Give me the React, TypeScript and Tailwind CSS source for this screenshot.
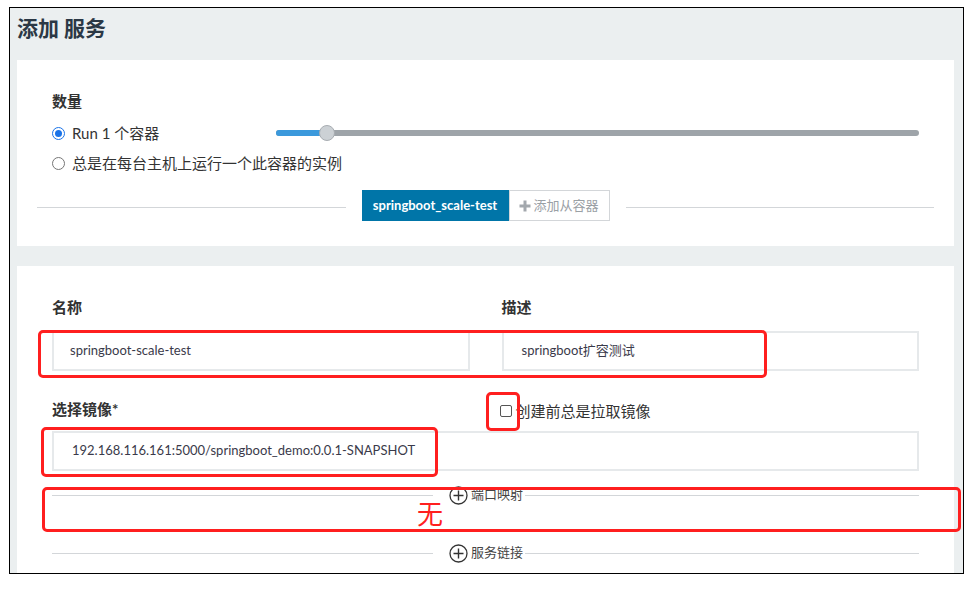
import React from 'react';

const FONT = "font-['Lato','Noto_Sans_CJK_SC',sans-serif]";

function PlusCircle() {
  return (
    <svg width="19" height="19" viewBox="0 0 19 19" className="shrink-0">
      <circle cx="9.5" cy="9.5" r="8.5" fill="none" stroke="#333" strokeWidth="1.3" />
      <path d="M9.5 4.5v10M4.5 9.5h10" stroke="#333" strokeWidth="1.4" />
    </svg>
  );
}

function Divider({ label }: { label: string }) {
  return (
    <div className="flex items-center h-5">
      <div className="w-[381px] h-px bg-[#d3d6d9]" />
      <div className="flex items-center ml-4 mr-0.5 gap-[3px]">
        <PlusCircle />
        <span className="text-[13px] text-[#444] leading-5 -mt-0.5">{label}</span>
      </div>
      <div className="flex-1 h-px bg-[#d3d6d9]" />
    </div>
  );
}

function Radio({ checked }: { checked?: boolean }) {
  return checked ? (
    <span className="w-[13px] h-[13px] rounded-full border border-[#1a73e8] flex items-center justify-center shrink-0">
      <span className="w-[7px] h-[7px] rounded-full bg-[#1a73e8]" />
    </span>
  ) : (
    <span className="w-[13px] h-[13px] rounded-full border border-[#767676] shrink-0" />
  );
}

function TextBox({ value, className = '' }: { value?: string; className?: string }) {
  return (
    <div className={`h-10 border-2 border-[#e6e9eb] flex items-center text-[13px] text-[#3a3a4a] ${className}`}>
      {value}
    </div>
  );
}

// red annotation boxes drawn on top of the screenshot
const MARKS = [
  { left: 28, top: 322, width: 729, height: 48 },
  { left: 476, top: 384, width: 34, height: 39 },
  { left: 31, top: 419, width: 397, height: 50 },
  { left: 32, top: 479, width: 919, height: 45 },
];

export default function App() {
  return (
    <div className={`w-[978px] h-[592px] bg-white pt-[7px] pl-[9px] ${FONT}`}>
      <div className="relative w-[955px] h-[567px] border border-black bg-[#ebeff0] overflow-hidden pl-[7px] pr-[9px]">
        {/* Title */}
        <div className="h-[52px] pt-[9px]">
          <h1 className="text-[21px] font-bold leading-[22px] text-[#2b3845]">添加 服务</h1>
        </div>

        {/* Scale card */}
        <div className="bg-white h-[186px] pt-[31px]">
          <div className="px-[35px]">
            <div className="text-[15px] font-bold leading-5 text-[#333]">数量</div>
            <div className="flex items-center h-5 mt-3">
              <div className="w-[224px] flex items-center gap-[7px]">
                <Radio checked />
                <span className="text-[15px] text-[#333]">Run 1 个容器</span>
              </div>
              <div className="flex-1 relative h-[6px] rounded-full bg-[#9ea4a9]">
                <div className="absolute left-0 top-0 h-[6px] w-[51px] rounded-full bg-[#3b99dc]" />
                <div className="absolute left-[43px] top-[-5px] w-4 h-4 rounded-full bg-[#ccd1d5] border border-[#a8adb2]" />
              </div>
            </div>
            <div className="flex items-center h-5 mt-[10px] gap-[7px]">
              <Radio />
              <span className="text-[15px] text-[#333]">总是在每台主机上运行一个此容器的实例</span>
            </div>
          </div>
          <div className="flex items-center px-5 mt-[17px]">
            <div className="flex-1 h-px bg-[#d3d6d9] mt-[4px]" />
            <div className="flex mx-4">
              <div className="h-[31px] w-[147px] bg-[#0075a8] text-white text-[13px] font-bold flex items-center justify-center">
                springboot_scale-test
              </div>
              <div className="h-[31px] w-[101px] border border-[#d3d6d9] text-[#9aa0a5] text-[13px] flex items-center justify-center gap-[2px]">
                <svg width="12" height="12" viewBox="0 0 12 12">
                  <path d="M6 0.5v11M0.5 6h11" stroke="#a3a8ad" strokeWidth="3" />
                </svg>
                添加从容器
              </div>
            </div>
            <div className="flex-1 h-px bg-[#d3d6d9] mt-[4px]" />
          </div>
        </div>

        {/* Config card */}
        <div className="bg-white mt-5 h-[320px] px-[35px] pt-[31px]">
          <div className="grid grid-cols-2 gap-x-8">
            <div className="text-[15px] font-bold leading-5 text-[#333]">名称</div>
            <div className="text-[15px] font-bold leading-5 text-[#333]">描述</div>
            <TextBox value="springboot-scale-test" className="mt-[14px] pl-4" />
            <TextBox value="springboot扩容测试" className="mt-[14px] pl-[18px]" />
          </div>
          <div className="grid grid-cols-2 gap-x-8 mt-[28px]">
            <div className="text-[15px] font-bold leading-5 text-[#333]">选择镜像*</div>
            <div className="flex items-center gap-1 h-5 mt-[2px] -ml-[2px]">
              <span className="w-3 h-3 rounded-[2px] border border-[#555] shrink-0" />
              <span className="text-[15px] text-[#333]">创建前总是拉取镜像</span>
            </div>
          </div>
          <TextBox value="192.168.116.161:5000/springboot_demo:0.0.1-SNAPSHOT" className="mt-[10px] pl-[18px]" />
          <div className="mt-[14px]">
            <Divider label="端口映射" />
          </div>
          <div className="mt-[38px]">
            <Divider label="服务链接" />
          </div>
        </div>

        {/* annotations */}
        {MARKS.map((m, i) => (
          <div
            key={i}
            className="absolute border-[3px] border-[#ff1f1f] rounded-[5px]"
            style={{ left: m.left, top: m.top, width: m.width, height: m.height }}
          />
        ))}
        <span className="absolute left-[407px] top-[491px] text-[26px] leading-[28px] text-[#ff1f1f] font-['Noto_Sans_CJK_SC',sans-serif]">
          无
        </span>
      </div>
    </div>
  );
}
